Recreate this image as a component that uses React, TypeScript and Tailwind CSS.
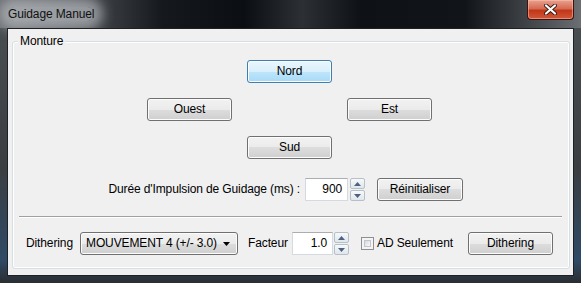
import React from 'react';

const btnBase =
    'flex items-center h-[23px] rounded-[3px] border text-black shadow-[inset_0_0_0_1px_#fcfcfc]';
const btnGray =
    'border-[#707070] bg-[linear-gradient(to_bottom,#f2f2f2_0%,#ebebeb_50%,#dddddd_50%,#cfcfcf_100%)]';
const btnBlue =
    'border-[#3c7fb1] bg-[linear-gradient(to_bottom,#eaf6fd_0%,#d9f0fc_50%,#bee6fd_50%,#a7d9f5_100%)]';

const WinButton: React.FC<{ label: string; w: string; focused?: boolean }> = ({ label, w, focused }) => (
    <div className={`${btnBase} justify-center ${focused ? btnBlue : btnGray} ${w}`}>{label}</div>
);

const Spinner: React.FC = () => (
    <div className="flex flex-col gap-[1px] w-[15px] h-[23px]">
        <div className="flex-1 flex items-center justify-center border border-[#b5c0ca] rounded-[2px] bg-[linear-gradient(to_bottom,#f7f9fa,#e1e6eb)]">
            <svg width="7" height="4" viewBox="0 0 7 4">
                <path d="M0 4 L3.5 0 L7 4 Z" fill="#4c6283" />
            </svg>
        </div>
        <div className="flex-1 flex items-center justify-center border border-[#b5c0ca] rounded-[2px] bg-[linear-gradient(to_bottom,#f7f9fa,#e1e6eb)]">
            <svg width="7" height="4" viewBox="0 0 7 4">
                <path d="M0 0 L7 0 L3.5 4 Z" fill="#4c6283" />
            </svg>
        </div>
    </div>
);

const NumberBox: React.FC<{ value: string; w: string }> = ({ value, w }) => (
    <div
        className={`h-[23px] ${w} bg-white border border-[#d5dae0] border-t-[#abadb3] flex items-center justify-end pr-[5px] text-black`}
    >
        {value}
    </div>
);

export default function App() {
    return (
        <div className="w-[581px] h-[283px] flex flex-col overflow-hidden bg-[linear-gradient(to_bottom,#4b5055,#3a3e43_60%,#2f4a66_92%,#2a2d31)] font-['Segoe_UI','Liberation_Sans',sans-serif] text-[12px] leading-[15px] tracking-[-0.12px]">
            {/* Title bar */}
            <div className="h-[28px] flex justify-between bg-[linear-gradient(90deg,#6a6e72_0%,#50555a_12%,#15181c_28%,#0b0e12_42%,#2c3034_52%,#0e1115_62%,#111418_80%,#4e5256_94%,#6b6f73_100%)]">
                <div className="pl-[8px] pt-[7px]">
                    <span className="text-[#111] rounded-full bg-[rgba(200,203,207,0.6)] shadow-[0_0_12px_9px_rgba(200,203,207,0.6)]">
                        Guidage Manuel
                    </span>
                </div>
                <div className="mr-[7px] w-[47px] h-[20px] rounded-b-[4px] border border-t-0 border-[#3a1410] flex items-center justify-center bg-[linear-gradient(to_bottom,#e7a290_0%,#d66a52_45%,#c13718_55%,#d2573b_100%)] shadow-[inset_0_0_0_1px_rgba(255,200,180,0.5)]">
                    <svg width="13" height="11" viewBox="0 0 13 11">
                        <path d="M2 1.5 L11 9.5 M11 1.5 L2 9.5" stroke="#3a1a14" strokeWidth="4" strokeLinecap="round" />
                        <path d="M2 1.5 L11 9.5 M11 1.5 L2 9.5" stroke="#ffffff" strokeWidth="2.2" strokeLinecap="round" />
                    </svg>
                </div>
            </div>

            {/* Client area */}
            <div className="flex-1 mx-[7px] mb-[7px] border border-[#1d2024] bg-[#f0f0f0] pt-[12px] pl-[4px] pr-[3px]">
                <div className="relative border border-[#d5dfe5] rounded-[3px] shadow-[inset_0_0_0_1px_#ffffff] h-[228px]">
                    <span className="absolute left-[5px] top-[-8px] px-[2px] bg-[#f0f0f0] text-black">Monture</span>

                    {/* Directions */}
                    <div className="pt-[18px] pl-[134px]">
                        <div className="grid grid-cols-[85px_85px_85px] gap-x-[15px] gap-y-[15px]">
                            <div />
                            <WinButton label="Nord" w="w-[85px]" focused />
                            <div />
                            <WinButton label="Ouest" w="w-[85px]" />
                            <div />
                            <WinButton label="Est" w="w-[85px]" />
                            <div />
                            <WinButton label="Sud" w="w-[85px]" />
                            <div />
                        </div>
                    </div>

                    {/* Pulse duration */}
                    <div className="flex items-center mt-[19px]">
                        <div className="w-[287px] text-right text-black">Durée d'Impulsion de Guidage (ms) :</div>
                        <div className="ml-[5px]">
                            <NumberBox value="900" w="w-[43px]" />
                        </div>
                        <div className="ml-[2px]">
                            <Spinner />
                        </div>
                        <div className="ml-[12px]">
                            <WinButton label="Réinitialiser" w="w-[86px]" />
                        </div>
                    </div>

                    {/* Separator */}
                    <div className="mt-[15px] ml-[6px] mr-[7px] border-t border-t-[#a0a0a0] border-b border-b-white" />

                    {/* Dithering row */}
                    <div className="flex items-center mt-[14px] pl-[13px]">
                        <div className="w-[54px] text-black">Dithering</div>
                        <div className={`${btnBase} ${btnGray} w-[158px] justify-between pl-[5px] pr-[7px]`}>
                            <span className="whitespace-nowrap">MOUVEMENT 4 (+/- 3.0)</span>
                            <svg width="7" height="4" viewBox="0 0 7 4" className="shrink-0">
                                <path d="M0 0 L7 0 L3.5 4 Z" fill="#000" />
                            </svg>
                        </div>
                        <div className="ml-[10px] w-[44px] text-black">Facteur</div>
                        <NumberBox value="1.0" w="w-[41px]" />
                        <div className="ml-[1px]">
                            <Spinner />
                        </div>
                        <div className="ml-[12px] w-[107px] flex items-center gap-[3px]">
                            <div className="w-[13px] h-[13px] border border-[#8f8f8f] bg-[#f4f4f4] p-[2px]">
                                <div className="w-full h-full border border-[#c2c6cb] bg-[linear-gradient(135deg,#d6d9dd,#f8f8f8)]" />
                            </div>
                            <span className="text-black">AD Seulement</span>
                        </div>
                        <WinButton label="Dithering" w="w-[85px]" />
                    </div>
                </div>
            </div>
        </div>
    );
}
